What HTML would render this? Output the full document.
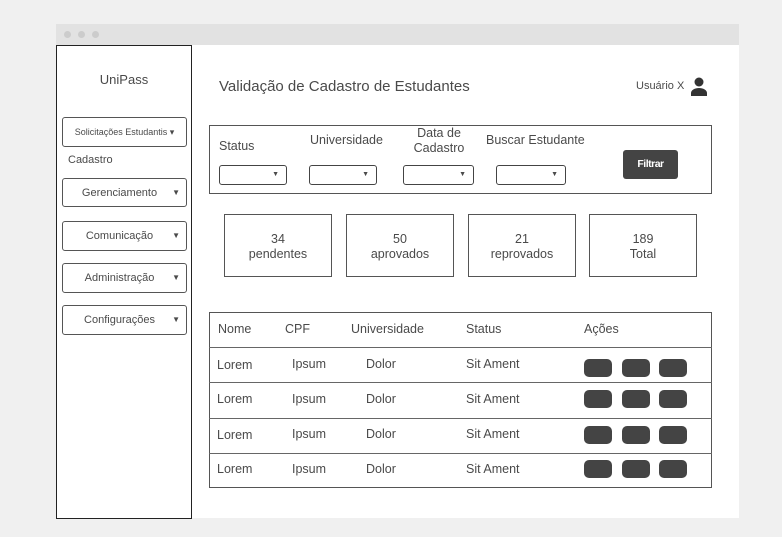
<!DOCTYPE html><html><head><style>
body{margin:0;width:782px;height:537px;background:#f0f0f0;font-family:"Liberation Sans",sans-serif;color:#4a4a4a;position:relative;overflow:hidden}
div{position:absolute;box-sizing:border-box}
.t{white-space:nowrap}
.btn{left:62px;width:125px;height:30px;border:1px solid #555;border-radius:3px;background:#fff;font-size:11px;text-align:center;line-height:28px;padding-right:10px}
.btn span{position:absolute;right:6px;top:0;font-size:8px}
.sel{height:20px;border:1px solid #444;border-radius:3px;background:#fff;font-size:7px;text-align:right;padding-right:7px;line-height:18px;top:165px}
.st{top:214px;width:108px;height:63px;border:1px solid #555;background:#fff;text-align:center;font-size:12.5px;line-height:15px;padding-top:17px}
.row{left:209px;width:503px;border-top:1.5px solid #666;font-size:12.5px}
.a{width:28px;height:18px;background:#444;border-radius:5px}
</style></head><body>
<div style="left:56px;top:24px;width:683px;height:494px;background:#fff"></div>
<div style="left:56px;top:24px;width:683px;height:21px;background:#e2e2e2"></div>
<div style="left:64px;top:31px;width:7px;height:7px;border-radius:50%;background:#ccc"></div>
<div style="left:78px;top:31px;width:7px;height:7px;border-radius:50%;background:#ccc"></div>
<div style="left:92px;top:31px;width:7px;height:7px;border-radius:50%;background:#ccc"></div>
<div style="left:56px;top:45px;width:136px;height:474px;border:1px solid #222;background:#fff"></div>
<div class="t" style="left:56px;width:136px;top:72px;text-align:center;font-size:13px">UniPass</div>
<div class="btn" style="top:117px;font-size:9px;padding-right:0">Solicitações Estudantis ▾</div>
<div class="t" style="left:68px;top:154px;font-size:11px">Cadastro</div>
<div class="btn" style="top:178px;height:29px">Gerenciamento<span>▼</span></div>
<div class="btn" style="top:221px">Comunicação<span>▼</span></div>
<div class="btn" style="top:263px">Administração<span>▼</span></div>
<div class="btn" style="top:305px">Configurações<span>▼</span></div>
<div class="t" style="left:219px;top:78px;font-size:15px">Validação de Cadastro de Estudantes</div>
<div class="t" style="left:636px;top:80px;font-size:11px">Usuário X</div>
<svg style="position:absolute;left:690px;top:77px" width="18" height="19" viewBox="0 0 18 19"><circle cx="9" cy="5" r="4.5" fill="#333"/><path d="M1 19v-3c0-3 4-5 8-5s8 2 8 5v3z" fill="#333"/></svg>
<div style="left:209px;top:125px;width:503px;height:69px;border:1.5px solid #555;background:#fff"></div>
<div class="t" style="left:219px;top:139px;font-size:12.5px">Status</div>
<div class="t" style="left:310px;top:133px;font-size:12.5px">Universidade</div>
<div class="t" style="left:403px;top:126px;width:72px;text-align:center;font-size:12.5px;line-height:15px">Data de<br>Cadastro</div>
<div class="t" style="left:486px;top:133px;font-size:12.5px">Buscar Estudante</div>
<div class="sel" style="left:219px;width:68px">▼</div>
<div class="sel" style="left:309px;width:68px">▼</div>
<div class="sel" style="left:403px;width:71px">▼</div>
<div class="sel" style="left:496px;width:70px">▼</div>
<div style="left:623px;top:150px;width:55px;height:29px;background:#444;border-radius:3px;color:#fff;font-size:10.5px;font-weight:bold;text-align:center;line-height:29px;letter-spacing:-0.5px">Filtrar</div>
<div class="st" style="left:224px">34<br>pendentes</div>
<div class="st" style="left:346px">50<br>aprovados</div>
<div class="st" style="left:468px">21<br>reprovados</div>
<div class="st" style="left:589px">189<br>Total</div>
<div style="left:209px;top:312px;width:503px;height:176px;border:1.5px solid #555;background:#fff"></div>
<div class="t" style="left:218px;top:322px;font-size:12.5px">Nome</div>
<div class="t" style="left:285px;top:322px;font-size:12.5px">CPF</div>
<div class="t" style="left:351px;top:322px;font-size:12.5px">Universidade</div>
<div class="t" style="left:466px;top:322px;font-size:12.5px">Status</div>
<div class="t" style="left:584px;top:322px;font-size:12.5px">Ações</div>
<div class="row" style="top:347px;height:35px"></div>
<div class="row" style="top:382px;height:36px"></div>
<div class="row" style="top:418px;height:35px"></div>
<div class="row" style="top:453px;height:35px"></div>
<div class="t" style="left:217px;top:358px;font-size:12.5px">Lorem</div><div class="t" style="left:292px;top:357px;font-size:12.5px">Ipsum</div><div class="t" style="left:366px;top:357px;font-size:12.5px">Dolor</div><div class="t" style="left:466px;top:357px;font-size:12.5px">Sit Ament</div>
<div class="a" style="left:584px;top:359px"></div><div class="a" style="left:622px;top:359px"></div><div class="a" style="left:659px;top:359px"></div>
<div class="t" style="left:217px;top:392px;font-size:12.5px">Lorem</div><div class="t" style="left:292px;top:392px;font-size:12.5px">Ipsum</div><div class="t" style="left:366px;top:392px;font-size:12.5px">Dolor</div><div class="t" style="left:466px;top:392px;font-size:12.5px">Sit Ament</div>
<div class="a" style="left:584px;top:390px"></div><div class="a" style="left:622px;top:390px"></div><div class="a" style="left:659px;top:390px"></div>
<div class="t" style="left:217px;top:428px;font-size:12.5px">Lorem</div><div class="t" style="left:292px;top:427px;font-size:12.5px">Ipsum</div><div class="t" style="left:366px;top:427px;font-size:12.5px">Dolor</div><div class="t" style="left:466px;top:427px;font-size:12.5px">Sit Ament</div>
<div class="a" style="left:584px;top:426px"></div><div class="a" style="left:622px;top:426px"></div><div class="a" style="left:659px;top:426px"></div>
<div class="t" style="left:217px;top:462px;font-size:12.5px">Lorem</div><div class="t" style="left:292px;top:462px;font-size:12.5px">Ipsum</div><div class="t" style="left:366px;top:462px;font-size:12.5px">Dolor</div><div class="t" style="left:466px;top:462px;font-size:12.5px">Sit Ament</div>
<div class="a" style="left:584px;top:460px"></div><div class="a" style="left:622px;top:460px"></div><div class="a" style="left:659px;top:460px"></div>
</body></html>
